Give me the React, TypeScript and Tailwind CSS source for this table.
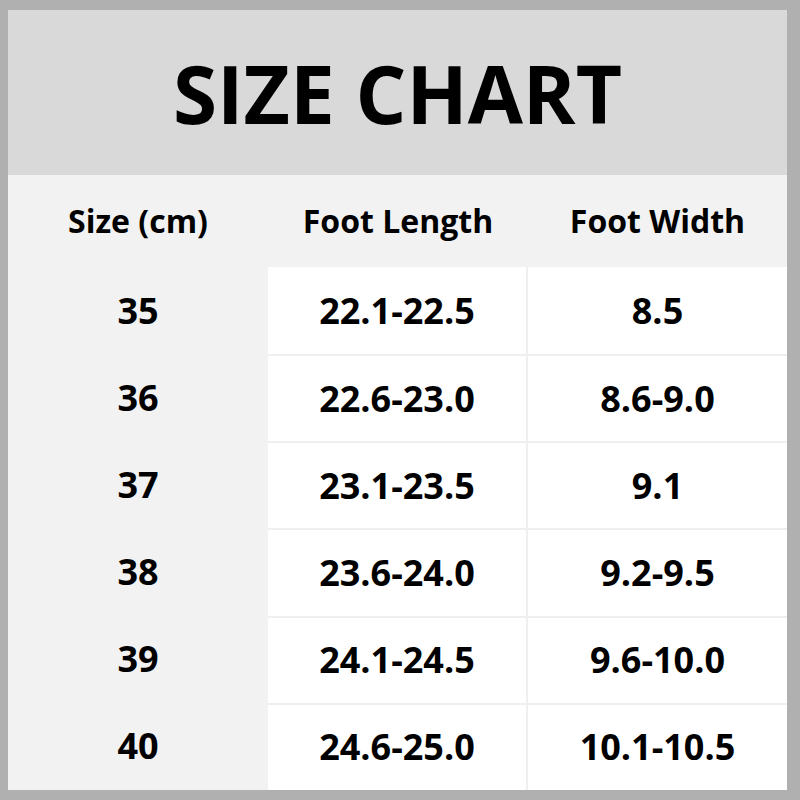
const ROWS = [
  ['35', '22.1-22.5', '8.5'],
  ['36', '22.6-23.0', '8.6-9.0'],
  ['37', '23.1-23.5', '9.1'],
  ['38', '23.6-24.0', '9.2-9.5'],
  ['39', '24.1-24.5', '9.6-10.0'],
  ['40', '24.6-25.0', '10.1-10.5'],
]

export default function App() {
  return (
    <div className="w-[800px] h-[800px] bg-[#b0b0b0] pt-[10px] pl-[8px] pr-[13px] pb-[10px] text-black" style={{ fontFamily: '"Open Sans", "Liberation Sans", sans-serif' }}>
      <div className="w-full h-full flex flex-col bg-[#f2f2f2]">
        <div className="h-[165px] bg-[#d9d9d9] flex items-center justify-center">
          <h1 className="text-[80px] font-bold leading-none">SIZE CHART</h1>
        </div>
        <div className="h-[92px] grid grid-cols-[260px_260px_1fr] items-center">
          <div className="text-center text-[32px] font-bold">Size (cm)</div>
          <div className="text-center text-[32px] font-bold">Foot Length</div>
          <div className="text-center text-[32px] font-bold">Foot Width</div>
        </div>
        <div className="flex-1 grid grid-rows-6">
          {ROWS.map(([s, l, w], i) => (
            <div key={s} className="grid grid-cols-[260px_260px_1fr]">
              <div className="flex items-center justify-center text-[36px] font-bold">{s}</div>
              <div className={`flex items-center justify-center bg-white text-[36px] font-bold border-r-2 border-[#efefef] ${i > 0 ? 'border-t-2' : ''}`}>{l}</div>
              <div className={`flex items-center justify-center bg-white text-[36px] font-bold border-[#efefef] ${i > 0 ? 'border-t-2' : ''}`}>{w}</div>
            </div>
          ))}
        </div>
      </div>
    </div>
  )
}
